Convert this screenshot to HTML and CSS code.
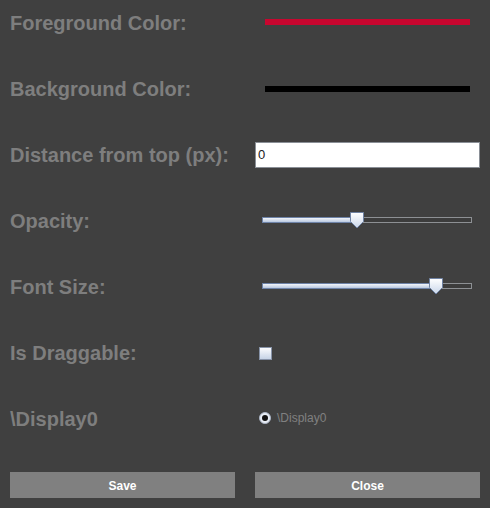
FILE: index.html
```html
<!DOCTYPE html>
<html>
<head>
<meta charset="utf-8">
<link rel="stylesheet" href="styles.css">
</head>
<body>
<div class="panel">
  <div class="form">
    <div class="label">Foreground Color:</div>
    <div class="control"><div class="swatch swatch-fg"></div></div>

    <div class="label">Background Color:</div>
    <div class="control"><div class="swatch swatch-bg"></div></div>

    <div class="label">Distance from top (px):</div>
    <div class="control"><input class="field" type="text" value="0"></div>

    <div class="label">Opacity:</div>
    <div class="control">
      <div class="slider">
        <div class="track"><div class="fill" style="width:92px"></div></div>
        <svg class="thumb" style="left:88px" width="14" height="17" viewBox="0 0 14 17">
          <defs>
            <linearGradient id="tg1" x1="0" y1="0" x2="0" y2="1">
              <stop offset="0" stop-color="#ffffff"/>
              <stop offset="1" stop-color="#c9d6ea"/>
            </linearGradient>
          </defs>
          <path d="M0.5 0.5 H13.5 V9.5 L7 16 L0.5 9.5 Z" fill="url(#tg1)" stroke="#6f82a3"/>
        </svg>
      </div>
    </div>

    <div class="label">Font Size:</div>
    <div class="control">
      <div class="slider">
        <div class="track"><div class="fill" style="width:170px"></div></div>
        <svg class="thumb" style="left:167px" width="14" height="17" viewBox="0 0 14 17">
          <defs>
            <linearGradient id="tg2" x1="0" y1="0" x2="0" y2="1">
              <stop offset="0" stop-color="#ffffff"/>
              <stop offset="1" stop-color="#c9d6ea"/>
            </linearGradient>
          </defs>
          <path d="M0.5 0.5 H13.5 V9.5 L7 16 L0.5 9.5 Z" fill="url(#tg2)" stroke="#6f82a3"/>
        </svg>
      </div>
    </div>

    <div class="label">Is Draggable:</div>
    <div class="control"><span class="checkbox"></span></div>

    <div class="label">\Display0</div>
    <div class="control">
      <span class="radio"><span class="dot"></span></span>
      <span class="radio-text">\Display0</span>
    </div>
  </div>
  <div class="buttons">
    <button class="btn">Save</button>
    <button class="btn">Close</button>
  </div>
</div>
</body>
</html>
```

FILE: styles.css
```css
html, body {
  margin: 0;
  padding: 0;
  background: #404040;
}
body {
  width: 490px;
  height: 508px;
  font-family: "Liberation Sans", Arial, sans-serif;
  overflow: hidden;
}
.panel {
  padding: 0 10px;
}
.form {
  display: grid;
  grid-template-columns: 225px 225px;
  column-gap: 20px;
  grid-auto-rows: 44px;
  row-gap: 22px;
}
.label {
  display: flex;
  align-items: center;
  color: #7e7e7e;
  font-weight: bold;
  font-size: 20px;
  white-space: nowrap;
  padding-top: 2px;
}
.control {
  display: flex;
  align-items: center;
}
.swatch {
  height: 6px;
  margin: 0 10px;
  flex: 1;
}
.swatch-fg {
  background: #c8062f;
  margin-top: -1px;
}
.swatch-bg {
  background: #000000;
  margin-top: 2px;
}
.field {
  box-sizing: border-box;
  width: 225px;
  height: 26px;
  margin: 1px 0 0 0;
  padding: 0 2px;
  border: 1px solid #8a8f96;
  background: #ffffff;
  font-family: "Liberation Sans", Arial, sans-serif;
  font-size: 13px;
  color: #222;
  outline: none;
}
.slider {
  position: relative;
  margin-left: 7px;
  margin-top: 3px;
  width: 210px;
  height: 17px;
}
.track {
  position: absolute;
  left: 0;
  top: 4px;
  box-sizing: border-box;
  width: 210px;
  height: 6px;
  border: 1px solid #8d9094;
  background: #3c3c3c;
}
.fill {
  position: absolute;
  left: -1px;
  top: -1px;
  height: 6px;
  box-sizing: border-box;
  border: 1px solid #6e83a8;
  background: linear-gradient(#f2f5fa, #b9c8e0);
}
.thumb {
  position: absolute;
  top: -1px;
}
.checkbox {
  display: inline-block;
  box-sizing: border-box;
  width: 13px;
  height: 13px;
  margin-left: 4px;
  margin-top: 2px;
  border: 1px solid #8793a8;
  background: linear-gradient(#fbfcfe, #c6d3e6);
}
.radio {
  display: inline-flex;
  align-items: center;
  justify-content: center;
  box-sizing: border-box;
  width: 12px;
  height: 12px;
  margin-left: 4px;
  border-radius: 50%;
  background: #e8edf5;
  border: 1px solid #aab4c4;
}
.dot {
  width: 6px;
  height: 6px;
  border-radius: 50%;
  background: #111;
}
.radio-text {
  margin-left: 6px;
  color: #808080;
  font-size: 12px;
}
.buttons {
  display: grid;
  grid-template-columns: 225px 225px;
  column-gap: 20px;
  margin-top: 32px;
}
.btn {
  height: 26px;
  border: none;
  background: #808080;
  color: #ffffff;
  font-family: "Liberation Sans", Arial, sans-serif;
  font-weight: bold;
  font-size: 12px;
  padding: 0;
  padding-top: 2px;
}
```
